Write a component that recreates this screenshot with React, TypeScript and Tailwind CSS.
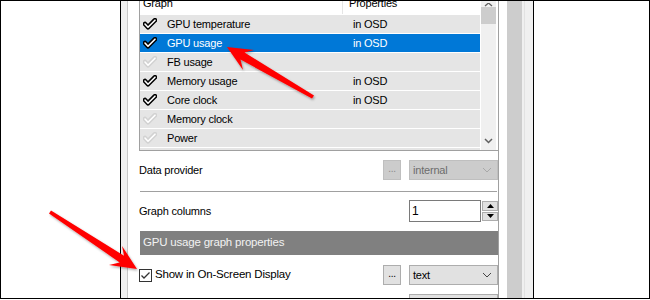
import React from "react";

const Check = ({ on }: { on: boolean }) => (
  <svg width="14" height="12" viewBox="0 0 14 12" className="shrink-0">
    <path d="M2 6 L5 9.2 L12 2.2" fill="none" stroke={on ? "#000" : "#d2d2d2"} strokeWidth="4.6" strokeLinecap="round" strokeLinejoin="round" />
    <path d="M2 6 L5 9.2 L12 2.2" fill="none" stroke="#fff" strokeWidth="1.6" strokeLinecap="round" strokeLinejoin="round" />
  </svg>
);

const rows = [
  { name: "GPU temperature", on: true, prop: "in OSD" },
  { name: "GPU usage", on: true, prop: "in OSD", sel: true },
  { name: "FB usage", on: false, prop: "" },
  { name: "Memory usage", on: true, prop: "in OSD" },
  { name: "Core clock", on: true, prop: "in OSD" },
  { name: "Memory clock", on: false, prop: "" },
  { name: "Power", on: false, prop: "" },
  { name: "", on: false, prop: "" },
];

const Chevron = ({ color }: { color: string }) => (
  <svg width="10" height="6" viewBox="0 0 10 6">
    <path d="M1 1 L5 5 L9 1" fill="none" stroke={color} strokeWidth="1" />
  </svg>
);

export default function App() {
  return (
    <div className="relative w-[650px] h-[300px] bg-white overflow-hidden font-['Liberation_Sans',Arial,sans-serif] text-[11px] tracking-[-0.2px] text-black">
      <div className="h-[299px] border border-black flex">
        <div className="w-[119px] bg-white" />
        <div className="w-px bg-black" />
        {/* dialog */}
        <div className="w-[412px] flex">
          <div className="w-[6px] bg-[#f0f0f0]" />
          <div className="w-px bg-[#c8c8c8]" />
          {/* tab page */}
          <div className="w-[370px] bg-white pl-[11px] flex flex-col overflow-hidden">
            {/* list box */}
            <div className="h-[150px] shrink-0 border-l border-b border-[#a0a0a0] flex overflow-hidden">
              <div className="w-[340px] flex flex-col gap-px bg-white">
                <div className="h-[22px] -mt-[9px] shrink-0 flex items-center bg-white">
                  <div className="w-[203px] h-full flex items-center pl-[3px] border-r border-[#e5e5e5]">Graph</div>
                  <div className="pl-[6px]">Properties</div>
                </div>
                {rows.map((r, i) => (
                  <div
                    key={i}
                    className={
                      "h-[18px] shrink-0 flex items-center " +
                      (r.sel ? "bg-[#0078d7] text-white" : "bg-[#e5e5e5]")
                    }
                  >
                    <div className="w-[203px] flex items-center pl-[3px] gap-[10px]">
                      {r.name && <Check on={r.on} />}
                      <span>{r.name}</span>
                    </div>
                    <div className="pl-[10px]">{r.prop}</div>
                  </div>
                ))}
              </div>
              <div className="w-px bg-white" />
              <div className="w-[15px] bg-[#f0f0f0] flex flex-col items-center">
                <div className="h-[6px] w-full flex justify-center items-end">
                  <svg width="9" height="4" viewBox="0 0 9 4"><path d="M1 3 L4.5 0 L8 3" fill="none" stroke="#606060" strokeWidth="1.3" /></svg>
                </div>
                <div className="w-full h-[17px] bg-[#cdcdcd]" />
                <div className="flex-1" />
                <div className="h-[12px] mb-[3px] flex items-center">
                  <svg width="9" height="6" viewBox="0 0 9 6"><path d="M1 1 L4.5 4.5 L8 1" fill="none" stroke="#606060" strokeWidth="1.5" /></svg>
                </div>
              </div>
              <div className="w-[2px] bg-white" />
            </div>

            {/* Data provider */}
            <div className="mt-[9px] h-[20px] flex items-center justify-between shrink-0">
              <span>Data provider</span>
              <div className="flex items-center gap-[8px] h-full">
                <div className="w-[18px] h-[20px] bg-[#cccccc] border border-[#bfbfbf] flex items-end justify-center pb-[3px] text-[#8a8a8a] text-[10px]">...</div>
                <div className="w-[89px] h-[20px] bg-[#cccccc] border border-[#bfbfbf] flex items-center justify-between pl-[3px] pr-[5px] text-[#6d6d6d]">
                  <span>internal</span>
                  <Chevron color="#a8a8a8" />
                </div>
              </div>
            </div>

            <div className="mt-[11px] ml-px w-[357px] h-px bg-[#a0a0a0] shrink-0" />

            {/* Graph columns */}
            <div className="mt-[8px] h-[22px] flex items-center justify-between shrink-0">
              <span>Graph columns</span>
              <div className="flex h-full gap-px">
                <div className="w-[72px] h-full border border-[#7a7a7a] bg-white flex items-center pl-[2px] text-[12px]">1</div>
                <div className="w-[16px] h-full flex flex-col gap-px py-px">
                  <div className="flex-1 bg-[#e1e1e1] border border-[#adadad] flex items-center justify-center">
                    <svg width="7" height="4" viewBox="0 0 7 4"><path d="M0 4 L3.5 0 L7 4 Z" fill="#000" /></svg>
                  </div>
                  <div className="flex-1 bg-[#e1e1e1] border border-[#adadad] flex items-center justify-center">
                    <svg width="7" height="4" viewBox="0 0 7 4"><path d="M0 0 L3.5 4 L7 0 Z" fill="#000" /></svg>
                  </div>
                </div>
              </div>
            </div>

            {/* header bar */}
            <div className="mt-[9px] ml-px h-[24px] bg-[#808080] text-[#f2f2f2] flex items-center pl-[3px] shrink-0 text-[11.5px]">
              GPU usage graph properties
            </div>

            {/* checkbox row */}
            <div className="mt-[10px] h-[20px] flex items-center justify-between shrink-0">
              <div className="flex items-center gap-[3px]">
                <div className="w-[13px] h-[13px] border border-[#333] bg-white flex items-center justify-center">
                  <svg width="11" height="9" viewBox="0 0 11 9"><path d="M1.5 4.5 L4 7 L9.5 1.5" fill="none" stroke="#333" strokeWidth="1.3" /></svg>
                </div>
                <span className="text-[11.5px]">Show in On-Screen Display</span>
              </div>
              <div className="flex items-center gap-[8px] h-full">
                <div className="w-[18px] h-[20px] bg-[#e1e1e1] border border-[#adadad] flex items-end justify-center pb-[3px] text-[10px]">...</div>
                <div className="w-[89px] h-[20px] bg-[#e1e1e1] border border-[#adadad] flex items-center justify-between pl-[3px] pr-[5px]">
                  <span>text</span>
                  <Chevron color="#444" />
                </div>
              </div>
            </div>

            <div className="mt-[9px] h-[20px] flex justify-end shrink-0">
              <div className="w-[89px] h-[20px] bg-[#e1e1e1] border border-[#adadad]" />
            </div>
          </div>
          <div className="w-px bg-[#a0a0a0]" />
          <div className="w-[8px] bg-white" />
          <div className="w-[15px] bg-[#cdcdcd]" />
          <div className="w-[11px] bg-[#f0f0f0] flex">
            <div className="w-[2px]" />
            <div className="w-px bg-[#e2e2e2]" />
          </div>
        </div>
        <div className="w-px bg-black" />
        <div className="flex-1 bg-white" />
      </div>

      {/* red arrows overlay */}
      <svg className="absolute inset-0 pointer-events-none" width="650" height="300" viewBox="0 0 650 300">
        <defs>
          <filter id="sh" x="-20%" y="-20%" width="140%" height="140%">
            <feDropShadow dx="1" dy="1.5" stdDeviation="1" floodColor="#000" floodOpacity="0.35" />
          </filter>
        </defs>
        <polygon
          filter="url(#sh)"
          fill="#ff0000"
          points="227,47 254,50 244.5,52.5 314,95.5 312,98.5 240.5,59.5 243,70"
        />
        <polygon
          filter="url(#sh)"
          fill="#ff0000"
          points="137,269 122,246 124,255.8 51,210.5 49,213.5 119.7,262.4 109,265"
        />
      </svg>
    </div>
  );
}
